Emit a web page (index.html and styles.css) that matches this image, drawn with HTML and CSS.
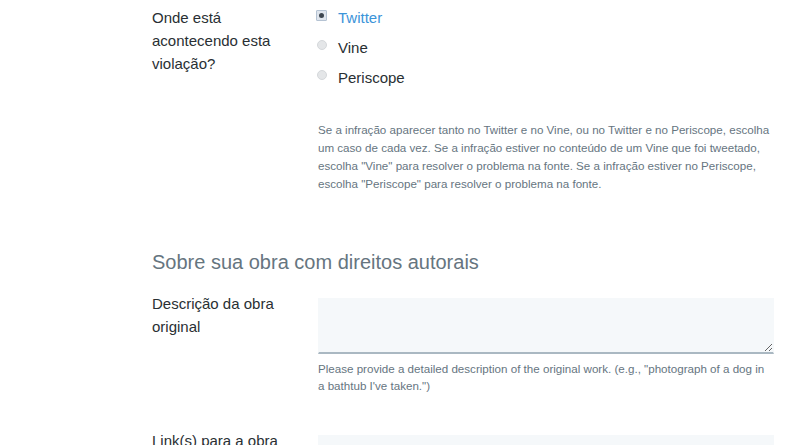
FILE: index.html
```html
<!DOCTYPE html>
<html lang="pt">
<head>
    <meta charset="UTF-8">
    <title>Formulário de direitos autorais</title>
    <link rel="stylesheet" href="styles.css">
</head>
<body>
<div class="form">
    <div class="row row-where">
        <div class="label">Onde está acontecendo esta violação?</div>
        <div class="field">
            <ul class="radios">
                <li class="checked"><span class="radio"></span><span class="radio-text">Twitter</span></li>
                <li><span class="radio"></span><span class="radio-text">Vine</span></li>
                <li><span class="radio"></span><span class="radio-text">Periscope</span></li>
            </ul>
            <p class="help help-where">Se a infração aparecer tanto no Twitter e no Vine, ou no Twitter e no Periscope, escolha um caso de cada vez. Se a infração estiver no conteúdo de um Vine que foi tweetado, escolha "Vine" para resolver o problema na fonte. Se a infração estiver no Periscope, escolha "Periscope" para resolver o problema na fonte.</p>
        </div>
    </div>

    <h2 class="section-title">Sobre sua obra com direitos autorais</h2>

    <div class="row row-desc">
        <div class="label">Descrição da obra original</div>
        <div class="field">
            <textarea class="textarea"></textarea>
            <p class="help help-desc">Please provide a detailed description of the original work. (e.g., "photograph of a dog in a bathtub I've taken.")</p>
        </div>
    </div>

    <div class="row row-link">
        <div class="label">Link(s) para a obra original</div>
        <div class="field">
            <textarea class="textarea"></textarea>
        </div>
    </div>
</div>
</body>
</html>
```

FILE: styles.css
```css
html,body{
    margin: 0;
    padding: 0;
    background-color: #fff;
    font-family: "Liberation Sans", Arial, sans-serif;
    color: #292f33;
    overflow: hidden;
}
ul,li{
    list-style: none;
    margin: 0;
    padding: 0;
}
.form{
    padding-left: 152px;
    width: 622px;
}
.row{
    display: flex;
}
.label{
    width: 150px;
    padding-right: 16px;
    font-size: 15px;
    line-height: 23px;
    color: #292f33;
}
.field{
    flex: 1;
}
.row-where{
    padding-top: 2px;
}
.row-where .label{
    padding-top: 4px;
}
.radios li{
    display: flex;
    align-items: center;
    height: 30px;
    font-size: 15px;
}
.radio{
    width: 10px;
    height: 10px;
    margin-left: -1px;
    margin-right: 11px;
    border-radius: 50%;
    background: #e4e6e8;
    border: 1px solid #d5d8db;
    box-sizing: border-box;
    position: relative;
    top: -2px;
}
.radios li.checked .radio{
    border-radius: 1px;
    background: #dfe5ed;
    border: 1px solid #b5c3d3;
    width: 11px;
    height: 11px;
    margin-left: -2px;
}
.radios li.checked .radio:after{
    content: "";
    position: absolute;
    left: 2px;
    top: 2px;
    width: 5px;
    height: 5px;
    border-radius: 50%;
    background: #3d4650;
}
.radios li.checked .radio-text{
    color: #3b94d9;
}
.help{
    margin: 0;
    font-size: 11.6px;
    color: #66757f;
}
.help-where{
    margin-top: 29px;
    line-height: 18px;
}
.section-title{
    margin: 57px 0 0 0;
    font-size: 20px;
    line-height: 24px;
    font-weight: normal;
    color: #66757f;
}
.row-desc{
    margin-top: 18px;
}
.textarea{
    display: block;
    width: 456px;
    height: 56px;
    margin: 6px 0 0 0;
    padding: 4px;
    box-sizing: border-box;
    background: #f5f8fa;
    border: 1px solid #f5f8fa;
    border-bottom: 2px solid #aab8c2;
    border-radius: 0;
    font-family: inherit;
    resize: vertical;
}
.help-desc{
    margin-top: 6px;
    padding-right: 8px;
    line-height: 17px;
}
.row-link{
    margin-top: 35px;
}
```
